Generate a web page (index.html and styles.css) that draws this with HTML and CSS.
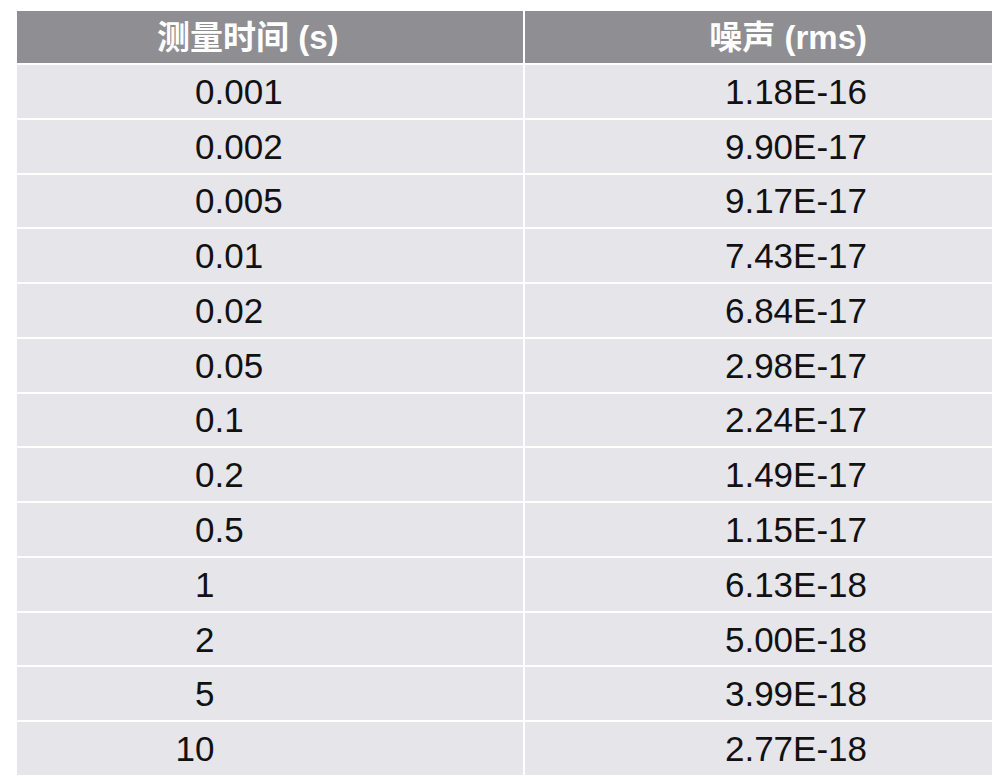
FILE: index.html
```html
<!DOCTYPE html>
<html lang="zh">
<head>
<meta charset="utf-8">
<title>测量时间与噪声</title>
<link rel="stylesheet" href="styles.css">
</head>
<body>
<div class="table">
  <div class="cell head left">测量时间 (s)</div>
  <div class="cell head right">噪声 (rms)</div>

  <div class="cell left"><span class="int">0</span><span>.001</span></div>
  <div class="cell right">1.18E-16</div>
  <div class="cell left"><span class="int">0</span><span>.002</span></div>
  <div class="cell right">9.90E-17</div>
  <div class="cell left"><span class="int">0</span><span>.005</span></div>
  <div class="cell right">9.17E-17</div>
  <div class="cell left"><span class="int">0</span><span>.01</span></div>
  <div class="cell right">7.43E-17</div>
  <div class="cell left"><span class="int">0</span><span>.02</span></div>
  <div class="cell right">6.84E-17</div>
  <div class="cell left"><span class="int">0</span><span>.05</span></div>
  <div class="cell right">2.98E-17</div>
  <div class="cell left"><span class="int">0</span><span>.1</span></div>
  <div class="cell right">2.24E-17</div>
  <div class="cell left"><span class="int">0</span><span>.2</span></div>
  <div class="cell right">1.49E-17</div>
  <div class="cell left"><span class="int">0</span><span>.5</span></div>
  <div class="cell right">1.15E-17</div>
  <div class="cell left"><span class="int">1</span></div>
  <div class="cell right">6.13E-18</div>
  <div class="cell left"><span class="int">2</span></div>
  <div class="cell right">5.00E-18</div>
  <div class="cell left"><span class="int">5</span></div>
  <div class="cell right">3.99E-18</div>
  <div class="cell left"><span class="int">10</span></div>
  <div class="cell right">2.77E-18</div>
</div>
</body>
</html>
```

FILE: styles.css
```css
html, body {
  background: #ffffff;
}
body {
  margin: 11px 0 0 17px;
  font-family: "Liberation Sans", "Noto Sans CJK SC", sans-serif;
}
.table {
  display: grid;
  grid-template-columns: 506px 467px;
  grid-template-rows: 52px repeat(13, 52.77px);
  gap: 2px;
  width: 975px;
  background: #ffffff;
}
.cell {
  display: flex;
  align-items: center;
  background: #e5e5ea;
  color: #111111;
  font-size: 35px;
  line-height: 1;
  white-space: nowrap;
}
.cell.head {
  background: #8e8e93;
  color: #ffffff;
  font-size: 33px;
  font-weight: 700;
  font-family: "Liberation Sans", "Noto Sans CJK SC", sans-serif;
}
.cell.left {
  padding-left: 140px;
}
.cell.right {
  justify-content: flex-end;
  padding-right: 125px;
}
.int {
  display: inline-block;
  width: 57.5px;
  text-align: right;
}
```
